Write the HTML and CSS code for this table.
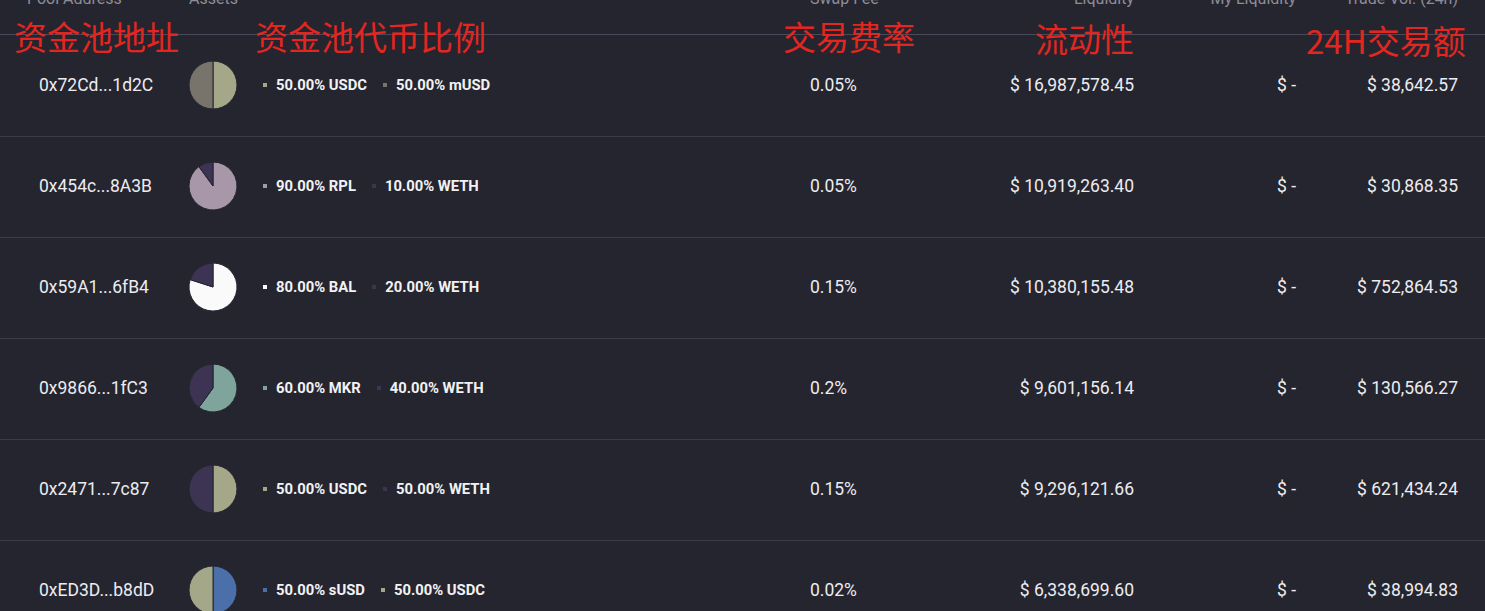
FILE: index.html
```html
<!DOCTYPE html>
<html lang="en">
<head>
<meta charset="utf-8">
<title>Pools</title>
<link rel="stylesheet" href="styles.css">
</head>
<body>
<div class="pools">
  <div class="head">
    <div class="h-addr">Pool Address</div>
    <div class="h-assets">Assets</div>
    <div class="h-fee">Swap Fee</div>
    <div class="num">Liquidity</div>
    <div class="num">My Liquidity</div>
    <div class="num">Trade Vol. (24h)</div>
  </div>

  <div class="row">
    <div class="addr">0x72Cd...1d2C</div>
    <div class="assets">
      <svg class="pie" viewBox="0 0 48 48" width="48" height="48">
        <path class="c-usdc" d="M24,24 L24,0 A24,24 0 0 1 24,48 Z"/>
        <path class="c-musd" d="M24,24 L24,48 A24,24 0 0 1 24,0 Z"/>
      </svg>
      <div class="legend">
        <span class="item"><i class="dot c-usdc"></i>50.00% USDC</span>
        <span class="item"><i class="dot c-musd"></i>50.00% mUSD</span>
      </div>
    </div>
    <div class="fee">0.05%</div>
    <div class="num">$ 16,987,578.45</div>
    <div class="num">$ -</div>
    <div class="num">$ 38,642.57</div>
  </div>

  <div class="row">
    <div class="addr">0x454c...8A3B</div>
    <div class="assets">
      <svg class="pie" viewBox="0 0 48 48" width="48" height="48">
        <path class="c-rpl" d="M24,24 L24,0 A24,24 0 1 1 9.89,4.58 Z"/>
        <path class="c-weth" d="M24,24 L9.89,4.58 A24,24 0 0 1 24,0 Z"/>
      </svg>
      <div class="legend">
        <span class="item"><i class="dot c-rpl"></i>90.00% RPL</span>
        <span class="item"><i class="dot c-weth"></i>10.00% WETH</span>
      </div>
    </div>
    <div class="fee">0.05%</div>
    <div class="num">$ 10,919,263.40</div>
    <div class="num">$ -</div>
    <div class="num">$ 30,868.35</div>
  </div>

  <div class="row">
    <div class="addr">0x59A1...6fB4</div>
    <div class="assets">
      <svg class="pie" viewBox="0 0 48 48" width="48" height="48">
        <path class="c-bal" d="M24,24 L24,0 A24,24 0 1 1 1.17,16.58 Z"/>
        <path class="c-weth" d="M24,24 L1.17,16.58 A24,24 0 0 1 24,0 Z"/>
      </svg>
      <div class="legend">
        <span class="item"><i class="dot c-bal"></i>80.00% BAL</span>
        <span class="item"><i class="dot c-weth"></i>20.00% WETH</span>
      </div>
    </div>
    <div class="fee">0.15%</div>
    <div class="num">$ 10,380,155.48</div>
    <div class="num">$ -</div>
    <div class="num">$ 752,864.53</div>
  </div>

  <div class="row">
    <div class="addr">0x9866...1fC3</div>
    <div class="assets">
      <svg class="pie" viewBox="0 0 48 48" width="48" height="48">
        <path class="c-mkr" d="M24,24 L24,0 A24,24 0 1 1 9.89,43.42 Z"/>
        <path class="c-weth" d="M24,24 L9.89,43.42 A24,24 0 0 1 24,0 Z"/>
      </svg>
      <div class="legend">
        <span class="item"><i class="dot c-mkr"></i>60.00% MKR</span>
        <span class="item"><i class="dot c-weth"></i>40.00% WETH</span>
      </div>
    </div>
    <div class="fee">0.2%</div>
    <div class="num">$ 9,601,156.14</div>
    <div class="num">$ -</div>
    <div class="num">$ 130,566.27</div>
  </div>

  <div class="row">
    <div class="addr">0x2471...7c87</div>
    <div class="assets">
      <svg class="pie" viewBox="0 0 48 48" width="48" height="48">
        <path class="c-usdc" d="M24,24 L24,0 A24,24 0 0 1 24,48 Z"/>
        <path class="c-weth" d="M24,24 L24,48 A24,24 0 0 1 24,0 Z"/>
      </svg>
      <div class="legend">
        <span class="item"><i class="dot c-usdc"></i>50.00% USDC</span>
        <span class="item"><i class="dot c-weth"></i>50.00% WETH</span>
      </div>
    </div>
    <div class="fee">0.15%</div>
    <div class="num">$ 9,296,121.66</div>
    <div class="num">$ -</div>
    <div class="num">$ 621,434.24</div>
  </div>

  <div class="row">
    <div class="addr">0xED3D...b8dD</div>
    <div class="assets">
      <svg class="pie" viewBox="0 0 48 48" width="48" height="48">
        <path class="c-susd" d="M24,24 L24,0 A24,24 0 0 1 24,48 Z"/>
        <path class="c-usdc" d="M24,24 L24,48 A24,24 0 0 1 24,0 Z"/>
      </svg>
      <div class="legend">
        <span class="item"><i class="dot c-susd"></i>50.00% sUSD</span>
        <span class="item"><i class="dot c-usdc"></i>50.00% USDC</span>
      </div>
    </div>
    <div class="fee">0.02%</div>
    <div class="num">$ 6,338,699.60</div>
    <div class="num">$ -</div>
    <div class="num">$ 38,994.83</div>
  </div>

  <div class="note note-addr">资金池地址</div>
  <div class="note note-assets">资金池代币比例</div>
  <div class="note note-fee">交易费率</div>
  <div class="note note-liq">流动性</div>
  <div class="note note-vol">24H交易额</div>
</div>
</body>
</html>
```

FILE: styles.css
```css
html, body {
  margin: 0;
  padding: 0;
  background: #25252f;
  overflow: hidden;
}

body {
  font-family: Roboto, "Liberation Sans", sans-serif;
  color: #ececf0;
}

.pools {
  position: relative;
  margin-top: -9px;
  width: 1485px;
}

.head,
.row {
  display: grid;
  grid-template-columns: 189px 621px 190px 134px 162px 162px;
  padding-right: 27px;
}

.head {
  font-size: 16px;
  line-height: 16px;
  color: #8d8d98;
  padding-bottom: 27px;
  margin-bottom: 1px;
  border-bottom: 1px solid #4a4a5a;
}

.h-addr {
  padding-left: 27px;
}

.row {
  box-sizing: border-box;
  height: 101px;
  padding-bottom: 3px;
  align-items: center;
  border-bottom: 1px solid #3b3b49;
  font-size: 17.5px;
}

.addr {
  padding-left: 39px;
}

.num {
  text-align: right;
}

.assets {
  display: flex;
  align-items: center;
}

.pie {
  display: block;
  width: 48px;
  height: 48px;
  margin-right: 26px;
}

.pie path {
  stroke: #25252f;
  stroke-width: 1;
}

.legend {
  display: flex;
  gap: 16px;
  font-size: 14.8px;
  font-weight: 700;
  color: #f2f2f4;
}

.item {
  display: flex;
  align-items: center;
  gap: 9px;
}

.dot {
  display: block;
  width: 4px;
  height: 4px;
}

.c-usdc { fill: #a5a888; background: #a5a888; }
.c-musd { fill: #78746b; background: #78746b; }
.c-weth { fill: #3d3453; background: #3d3453; }
.c-rpl  { fill: #a797a9; background: #a797a9; }
.c-bal  { fill: #fafafa; background: #fafafa; }
.c-mkr  { fill: #7fa49c; background: #7fa49c; }
.c-susd { fill: #4a6fa9; background: #4a6fa9; }

.note {
  position: absolute;
  font-family: "Noto Sans CJK SC", "Noto Sans", sans-serif;
  font-size: 33px;
  line-height: 33px;
  color: #e3261f;
  white-space: nowrap;
}

.note-addr { left: 14px; top: 29px; }
.note-assets { left: 255px; top: 29px; }
.note-fee { left: 783px; top: 29px; }
.note-liq { left: 1035px; top: 31px; }
.note-vol { left: 1306px; top: 33px; }
```
